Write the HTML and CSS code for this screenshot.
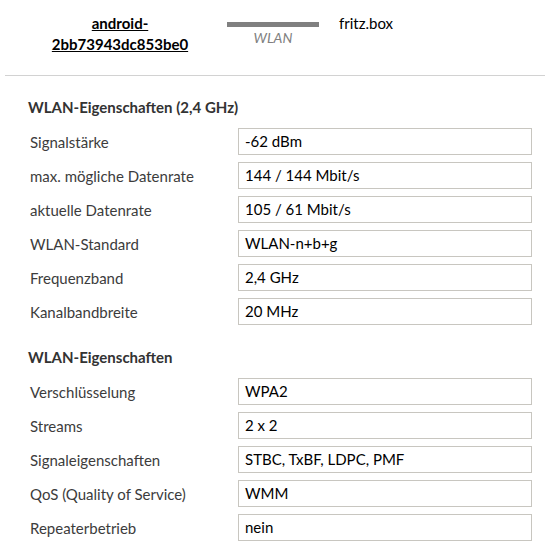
FILE: index.html
```html
<!DOCTYPE html>
<html lang="de">
<head>
<meta charset="utf-8">
<link rel="stylesheet" href="styles.css">
</head>
<body>
<div class="page">
  <div class="conn">
    <div class="device"><a href="#">android-<br>2bb73943dc853be0</a></div>
    <div class="link">
      <div class="bar"></div>
      <div class="linklabel">WLAN</div>
    </div>
    <div class="router">fritz.box</div>
  </div>
  <hr class="sep">
  <div class="content">
    <h3 class="head">WLAN-Eigenschaften (2,4 GHz)</h3>
    <div class="row"><span class="lbl">Signalstärke</span><span class="val">-62 dBm</span></div>
    <div class="row"><span class="lbl">max. mögliche Datenrate</span><span class="val">144 / 144 Mbit/s</span></div>
    <div class="row"><span class="lbl">aktuelle Datenrate</span><span class="val">105 / 61 Mbit/s</span></div>
    <div class="row"><span class="lbl">WLAN-Standard</span><span class="val">WLAN-n+b+g</span></div>
    <div class="row"><span class="lbl">Frequenzband</span><span class="val">2,4 GHz</span></div>
    <div class="row"><span class="lbl">Kanalbandbreite</span><span class="val">20 MHz</span></div>
    <h3 class="head head2">WLAN-Eigenschaften</h3>
    <div class="row"><span class="lbl">Verschlüsselung</span><span class="val">WPA2</span></div>
    <div class="row"><span class="lbl">Streams</span><span class="val">2 x 2</span></div>
    <div class="row"><span class="lbl">Signaleigenschaften</span><span class="val">STBC, TxBF, LDPC, PMF</span></div>
    <div class="row"><span class="lbl">QoS (Quality of Service)</span><span class="val">WMM</span></div>
    <div class="row"><span class="lbl">Repeaterbetrieb</span><span class="val">nein</span></div>
  </div>
</div>
</body>
</html>
```
FILE: styles.css
```css
html, body {
  margin: 0;
  padding: 0;
  background: #fff;
}
body {
  font-family: "Source Sans Pro", Lato, "Liberation Sans", sans-serif;
  font-size: 15px;
  color: #3c3c3c;
}
.page {
  width: 545px;
}
.conn {
  display: flex;
  align-items: flex-start;
  padding-top: 13px;
  height: 62px;
}
.device {
  width: 200px;
  margin-left: 20px;
  text-align: center;
  line-height: 21px;
  font-weight: bold;
}
.device a {
  color: #000;
  text-decoration: underline;
}
.link {
  margin-left: 7px;
  width: 92px;
  padding-top: 9px;
  text-align: center;
}
.bar {
  height: 5px;
  background: #808080;
}
.linklabel {
  font-style: italic;
  color: #808080;
  font-size: 14px;
  line-height: 16px;
  margin-top: 3px;
}
.router {
  margin-left: 20px;
  color: #000;
  line-height: 21px;
}
.sep {
  margin: 0 0 0 5px;
  border: 0;
  border-top: 1px solid #d2d2d2;
  height: 0;
}
.content {
  padding: 20px 13px 0 28px;
}
.head {
  margin: 0 0 10px 0;
  font-size: 15px;
  font-weight: bold;
  line-height: 22px;
  color: #333;
}
.head2 {
  margin-top: 21px;
}
.row {
  display: flex;
  align-items: center;
  margin-bottom: 7px;
}
.lbl {
  width: 208px;
  padding-left: 2px;
}
.val {
  flex: 1;
  box-sizing: border-box;
  height: 27px;
  line-height: 25px;
  border: 1px solid #c8c6c0;
  padding-left: 6px;
  color: #000;
}
```
